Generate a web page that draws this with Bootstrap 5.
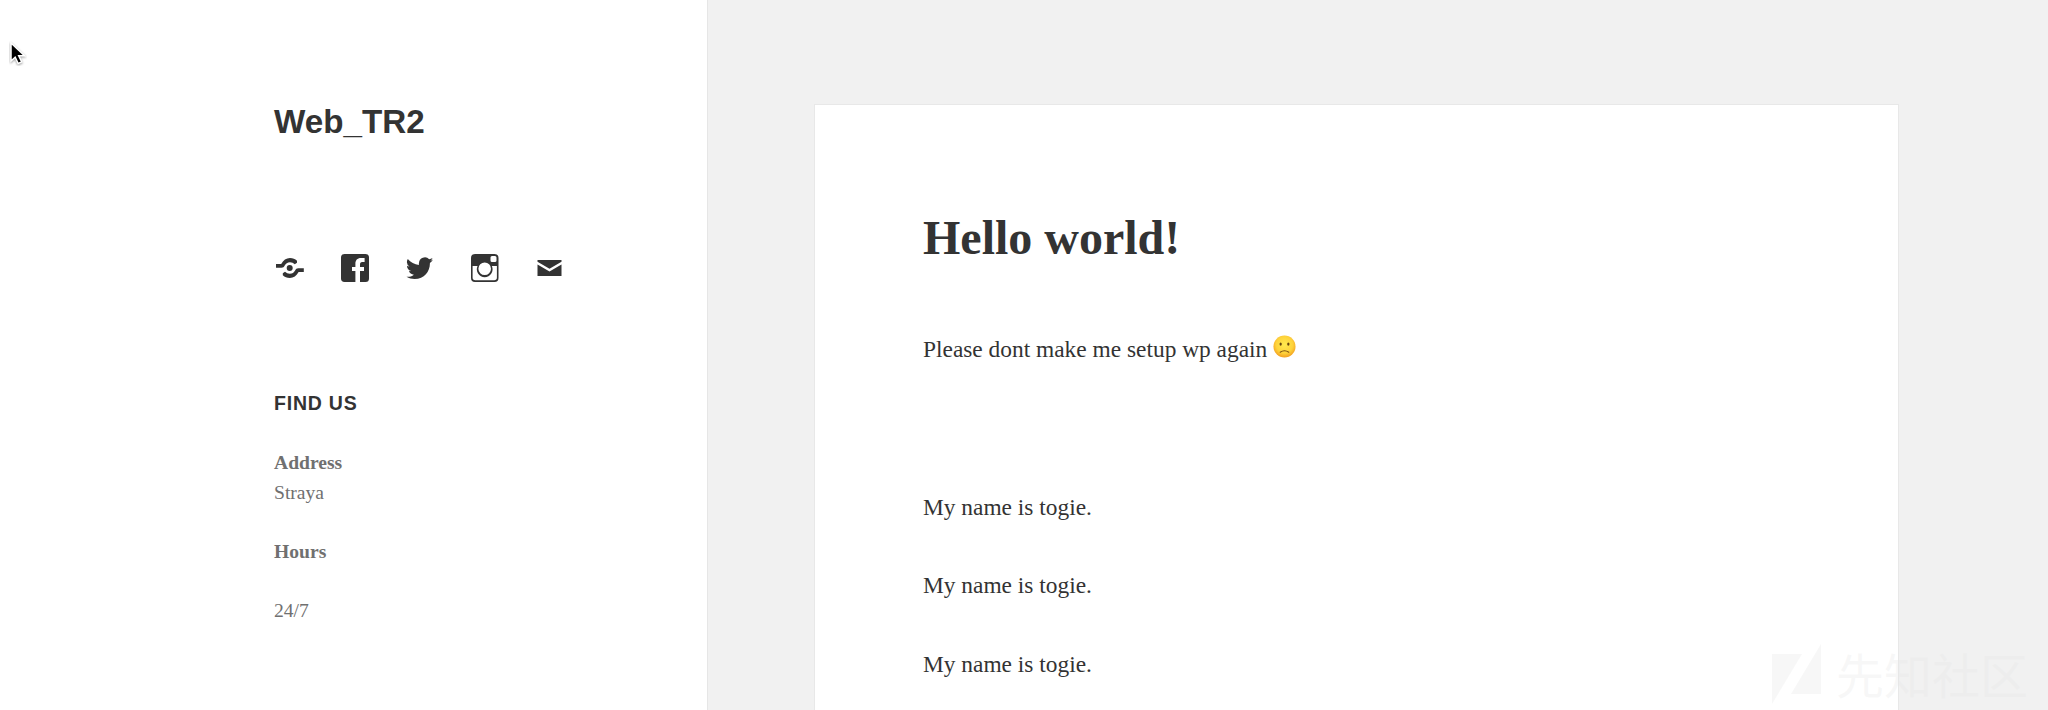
<!DOCTYPE html>
<html lang="en">
<head>
<meta charset="utf-8">
<title>Web_TR2</title>
<link rel="stylesheet" href="https://cdn.jsdelivr.net/npm/bootstrap@5.3.0/dist/css/bootstrap.min.css">
<style>
body{background:#f1f1f1;font-family:"Liberation Serif",serif;color:#333;height:710px}
.site-side{width:433px;padding:102px 0 0 274px;background:#fff;border-right:1px solid #e6e6e6;box-sizing:content-box}
.site-title{font:bold 33.2px/40px "Liberation Sans",sans-serif;margin-bottom:112px}
.social{height:28px;gap:37px;padding-left:2px}
.social svg{width:28px;height:28px;fill:#333;display:block}
.widget-title{font:bold 19.5px/30px "Liberation Sans",sans-serif;letter-spacing:.78px;margin:106px 0 30px}
.widget-text{font-size:19.6px;line-height:29.6px;color:#707070}
.widget-text p{margin-bottom:29.6px}
.site-main{padding:104px 149px 0 106px}
.post{background:#fff;border:1px solid #e8e8e8;border-bottom:0;padding:104px 108px 0}
.post h1{font-weight:bold;font-size:48px;line-height:58px;margin-bottom:63px}
.post p{font-size:23.4px;line-height:39.4px;margin-bottom:39.4px}
.emoji{width:23px;height:23px;vertical-align:-1px}
.pointer{left:9px;top:41px;width:18px;height:25px}
.watermark{left:1772px;top:643px;gap:15px;color:rgba(230,230,230,.3);font:48px/60px "Noto Sans CJK SC",sans-serif}
.watermark svg{width:49px;height:62px;display:block}
</style>
<script src="https://cdn.jsdelivr.net/npm/bootstrap@5.3.0/dist/js/bootstrap.bundle.min.js"></script>
</head>
<body class="d-flex overflow-hidden position-relative">
<aside class="site-side flex-shrink-0">
  <div class="site-title">Web_TR2</div>
  <nav class="social d-flex">
    <svg viewBox="0 0 28 28"><path d="M0 10h5.2C7.3 6.300 10.200 4 14 4c2.900 0 5 .9 7 2.700v2.100l-2.200 1.400C17.300 8.900 16 8.200 14 8.200c-2.600 0-4.200 1.300-5.300 3.300-.8 1.500-1.500 2.200-3.200 2.200H0zM27.800 18h-5.200c-2.100 3.700-5 6-8.800 6-2.900 0-5-.9-7-2.700v-2.100L9 17.800c1.500 1.300 2.800 2 4.800 2 2.600 0 4.200-1.300 5.300-3.300.8-1.500 1.500-2.200 3.200-2.200h5.500z"/><circle cx="13.700" cy="14" r="3"/></svg>
    <svg viewBox="0 0 28 28"><path d="M3.500 0h21A3.500 3.500 0 0 1 28 3.500v21a3.500 3.500 0 0 1-3.500 3.500H19V17h4v-4h-4v-2.200C19 9 19.500 8 21.200 8H23.600V4h-3.700c-3.700 0-5.500 2.400-5.500 5.700V13H11v4h3.400v11H3.500A3.500 3.500 0 0 1 0 24.500v-21A3.500 3.500 0 0 1 3.500 0z"/></svg>
    <svg viewBox="0 0 28 28"><path d="M27 5.600c-.8.600-1.600 1-2.600 1.200 1.100-.7 1.800-1.600 2.100-2.800-1 .6-2.100 1-3.300 1.200A5.900 5.900 0 0 0 13 9.100c-.2.600-.2 1.200-.1 1.800C8.600 10.600 4.500 8.600 1.800 5.100A5.600 5.600 0 0 0 3.500 12.400C2.600 12.400 1.700 12.100 1 11.700c0 2.700 1.800 4.800 4.300 5.300-.8.200-1.600.2-2.400.1.700 2.100 2.600 3.500 5 3.600C5.800 22.400 3.300 23 .5 22.800 3 24.300 5.700 25 8.600 25c9.700 0 15.300-7.800 15.300-15.300V9c1.300-.9 2.300-2 3.100-3.400z"/></svg>
    <svg viewBox="0 0 28 28"><path fill-rule="evenodd" d="M4 0h19.500a4 4 0 0 1 4 4v20a4 4 0 0 1-4 4H4a4 4 0 0 1-4-4V4a4 4 0 0 1 4-4zM21 2a1.500 1.500 0 0 0-1.500 1.500v3A1.500 1.500 0 0 0 21 8h3a1.500 1.500 0 0 0 1.500-1.500v-3A1.500 1.500 0 0 0 24 2zM1.600 12v11.500A2.700 2.700 0 0 0 4.300 26.200h18.900a2.700 2.700 0 0 0 2.700-2.700V12h-5a7.900 7.900 0 1 1-14.400 0zM13.700 8.500a6.300 6.300 0 1 0 0 12.600 6.300 6.300 0 0 0 0-12.600z"/></svg>
    <svg viewBox="0 0 28 28"><path d="M1.500 6h24v1.700l-12 7-12-7zM1.500 10.500l12 7 12-7V22h-24z"/></svg>
  </nav>
  <h2 class="widget-title">FIND US</h2>
  <div class="widget-text">
    <p><strong>Address</strong><br>Straya</p>
    <p><strong>Hours</strong></p>
    <p>24/7</p>
  </div>
</aside>
<main class="site-main flex-grow-1">
  <article class="post h-100">
    <h1>Hello world!</h1>
    <p>Please dont make me setup wp again <svg class="emoji" viewBox="0 0 24 24" role="img" aria-label="sad face"><defs><radialGradient id="face" cx=".5" cy=".42" r=".58"><stop offset="0" stop-color="#ffe94f"/><stop offset=".65" stop-color="#fed33b"/><stop offset="1" stop-color="#f3a020"/></radialGradient></defs><circle cx="12" cy="12" r="11.500" fill="url(#face)"/><ellipse cx="8" cy="9.500" rx="1.200" ry="1.800" fill="#664510"/><ellipse cx="16" cy="9.500" rx="1.200" ry="1.800" fill="#664510"/><path d="M7.500 18q4.500-3.200 9 0" fill="none" stroke="#7b4f12" stroke-width="1.100" stroke-linecap="round"/></svg></p>
    <p>&nbsp;</p>
    <p>My name is togie.</p>
    <p>My name is togie.</p>
    <p>My name is togie.</p>
  </article>
</main>
<svg class="pointer position-absolute" viewBox="0 0 18 25"><path d="M2 2v18l4.200-3.800 3 6.300 3.500-1.600-3-6.200H15.500z" fill="#000" stroke="#fff" stroke-width="1.500" style="filter:drop-shadow(0 1px 1px #0006)"/></svg>
<div class="watermark position-absolute d-flex text-nowrap"><svg viewBox="0 0 49 62" fill="currentColor"><path d="M0 11h30L0 61zM49 1v50H19z"/></svg><span>先知社区</span></div>
</body>
</html>
